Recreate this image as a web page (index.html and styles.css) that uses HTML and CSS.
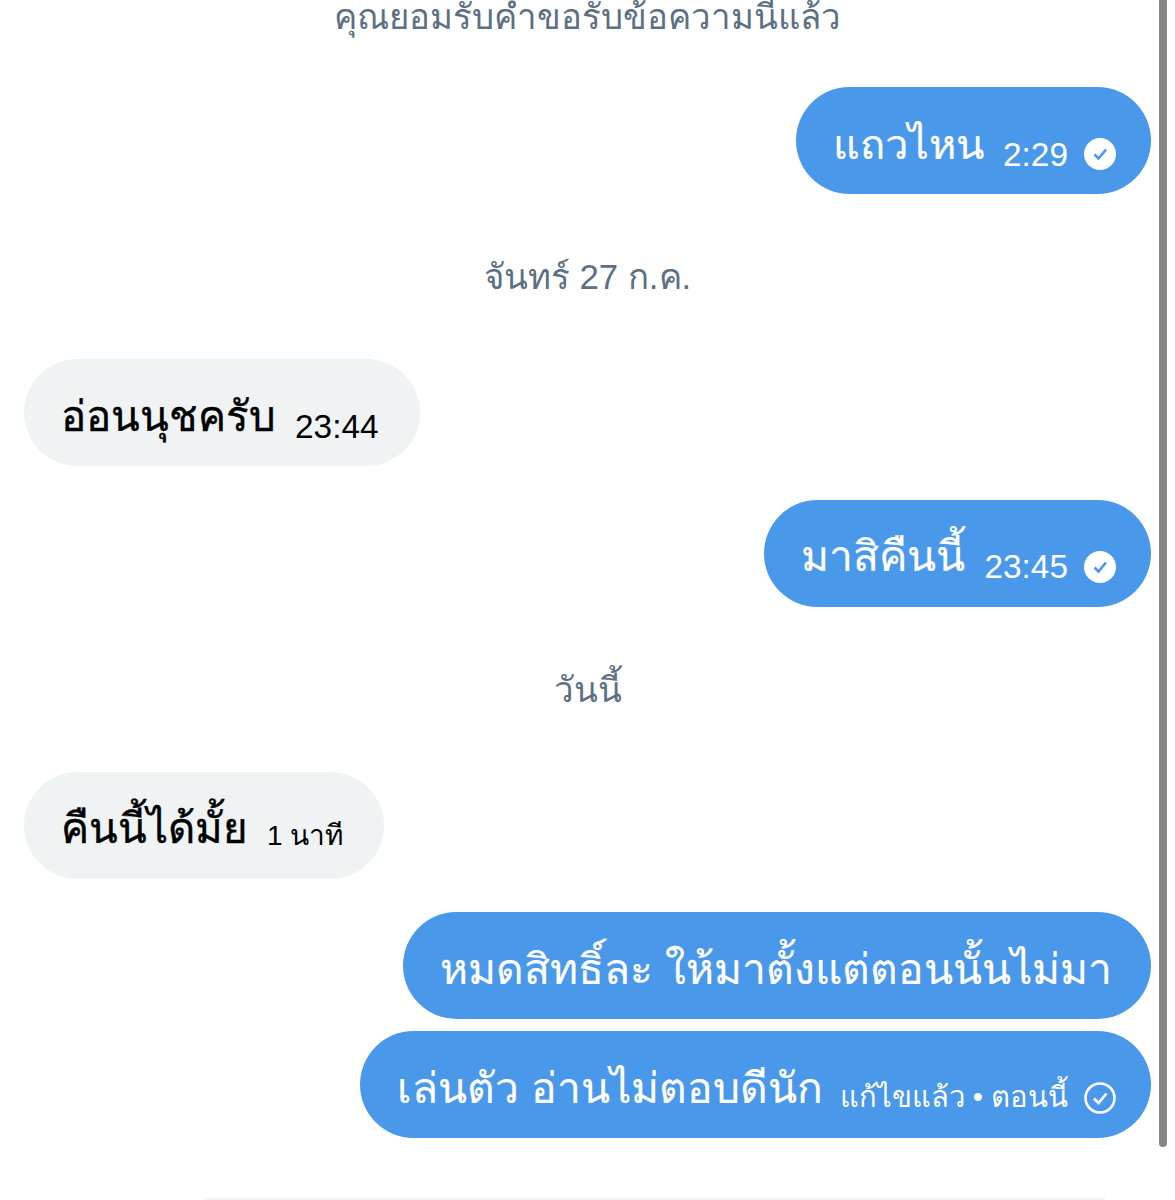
FILE: index.html
```html
<!DOCTYPE html>
<html lang="th">
<head>
    <meta charset="UTF-8">
    <meta name="viewport" content="width=device-width, initial-scale=1.0">
    <title>Messages</title>
    <link rel="stylesheet" href="styles.css">
</head>
<body>

<div class="page">
    <div class="chat">
        <div class="notice">คุณยอมรับคำขอรับข้อความนี้แล้ว</div>

        <div class="bubble sent first">
            <span class="text">แถวไหน</span>
            <span class="time">2:29</span>
            <svg class="tick" viewBox="0 0 32 32"><circle cx="16" cy="16" r="16" fill="#fff"/><path d="M10.5 16.5l4 4 7.5-9" fill="none" stroke="#4a98e9" stroke-width="2.6"/></svg>
        </div>

        <div class="date">จันทร์ 27 ก.ค.</div>

        <div class="bubble received">
            <span class="text">อ่อนนุชครับ</span>
            <span class="time">23:44</span>
        </div>

        <div class="bubble sent next">
            <span class="text">มาสิคืนนี้</span>
            <span class="time">23:45</span>
            <svg class="tick" viewBox="0 0 32 32"><circle cx="16" cy="16" r="16" fill="#fff"/><path d="M10.5 16.5l4 4 7.5-9" fill="none" stroke="#4a98e9" stroke-width="2.6"/></svg>
        </div>

        <div class="date">วันนี้</div>

        <div class="bubble received">
            <span class="text">คืนนี้ได้มั้ย</span>
            <span class="time minutes">1 นาที</span>
        </div>

        <div class="bubble sent next plain">
            <span class="text">หมดสิทธิ์ละ ให้มาตั้งแต่ตอนนั้นไม่มา</span>
        </div>

        <div class="bubble sent close">
            <span class="text">เล่นตัว อ่านไม่ตอบดีนัก</span>
            <span class="time edited">แก้ไขแล้ว • ตอนนี้</span>
            <svg class="tick" viewBox="0 0 32 32"><circle cx="16" cy="16" r="14.5" fill="none" stroke="#fff" stroke-width="2.6"/><path d="M10 16.5l4.5 4.5 8-9.5" fill="none" stroke="#fff" stroke-width="2.6"/></svg>
        </div>

        <div class="composer"></div>
    </div>

    <div class="scrollbar"></div>
</div>

</body>
</html>
```

FILE: styles.css
```css
html, body {
    margin: 0;
    padding: 0;
    background-color: #fff;
}
.page {
    position: relative;
    width: 1175px;
    height: 1200px;
    overflow: hidden;
    font-family: 'Liberation Sans', 'Noto Sans', sans-serif;
}
.chat {
    display: flex;
    flex-direction: column;
    width: 1127px; /* right edge of bubbles sits at 1151 */
    padding: 0 24px;
}
.notice {
    height: 34px;
    line-height: 34px;
    text-align: center;
    font-size: 34.8px;
    color: #5b7083;
    white-space: nowrap;
}
.date {
    height: 165px;
    line-height: 165px;
    text-align: center;
    font-size: 34.8px;
    color: #5b7083;
}
.bubble {
    display: flex;
    align-items: center;
    box-sizing: border-box;
    height: 107px;
    padding: 0 35px 0 37px;
    border-radius: 54px;
    white-space: nowrap;
}
.sent {
    align-self: flex-end;
    background-color: #4a98e9;
    color: #fff;
}
.plain {
    padding-right: 39px;
}
.received {
    align-self: flex-start;
    padding: 0 41px 0 37px;
    background-color: #eff3f4;
    color: #000;
}
.first {
    margin-top: 53px;
}
.next {
    margin-top: 33.5px;
}
.close {
    margin-top: 12px;
}
.text {
    margin-top: 6px;
    font-size: 42.5px;
    -webkit-text-stroke: 0.2px #fff;
}
.first .text {
    font-size: 41.6px;
}
.received .text {
    font-size: 42px;
    -webkit-text-stroke: 0.4px #000;
}
.time {
    margin-left: 19px;
    margin-top: 28px;
    font-size: 33.4px;
}
.minutes {
    margin-top: 20px;
    font-size: 28px;
}
.edited {
    margin-left: 17px;
    margin-top: 24px;
    font-size: 29.2px;
}
.tick {
    width: 32px;
    height: 32px;
    margin-left: 16px;
    margin-top: 27px;
}
.composer {
    margin-top: 60px;
    margin-left: 181px;
    width: 900px;
    height: 2px;
    background-color: #eff3f4;
}
.scrollbar {
    position: absolute;
    top: 0;
    left: 1159px;
    width: 8px;
    height: 1147px;
    border-radius: 0 0 4px 4px;
    background-color: #868686;
}
```
